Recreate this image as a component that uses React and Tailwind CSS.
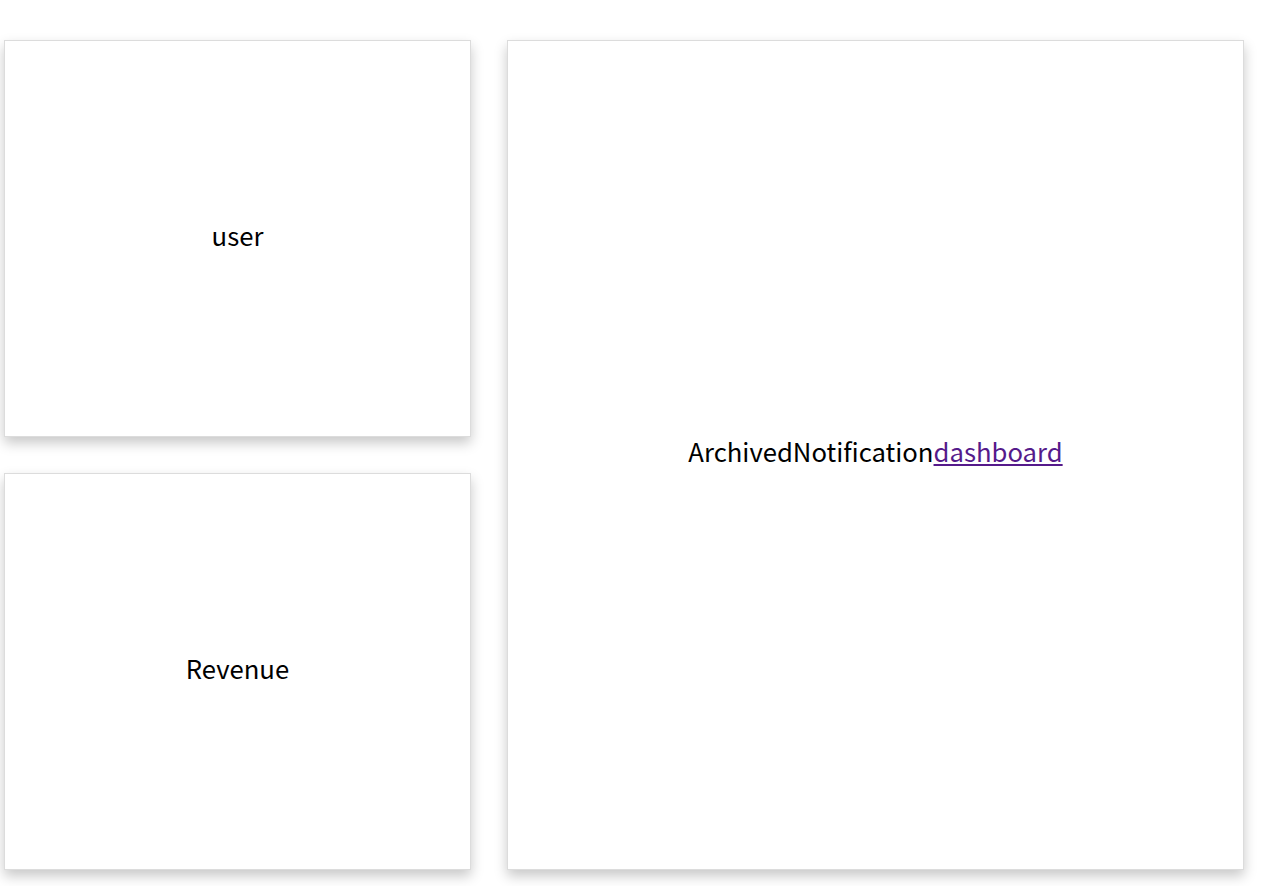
// Dashboard grid: two stacked cards on the left, one tall card on the right

const Card = ({ className = '', children }) => (
  <div
    className={`flex items-center justify-center bg-white border border-[#dcdcdc] shadow-[0_6px_12px_0_rgba(0,0,0,0.22)] ${className}`}
  >
    <span className="mb-2">{children}</span>
  </div>
);

const App = () => {
  return (
    <div
      className="min-h-screen bg-white pt-10 pl-1 text-black text-[25.7px] leading-none"
      style={{ fontFamily: '"Noto Sans CJK KR", "Noto Sans", sans-serif' }}
    >
      <div className="flex gap-[36px]">
        <div className="flex flex-col gap-[36px] w-[467px]">
          <Card className="h-[397px]">user</Card>
          <Card className="h-[397px]">Revenue</Card>
        </div>
        <Card className="w-[737px] h-[830px]">
          ArchivedNotification
          <a href="#dashboard" className="text-[#551a8b] underline">
            dashboard
          </a>
        </Card>
      </div>
    </div>
  );
};

export default App;
